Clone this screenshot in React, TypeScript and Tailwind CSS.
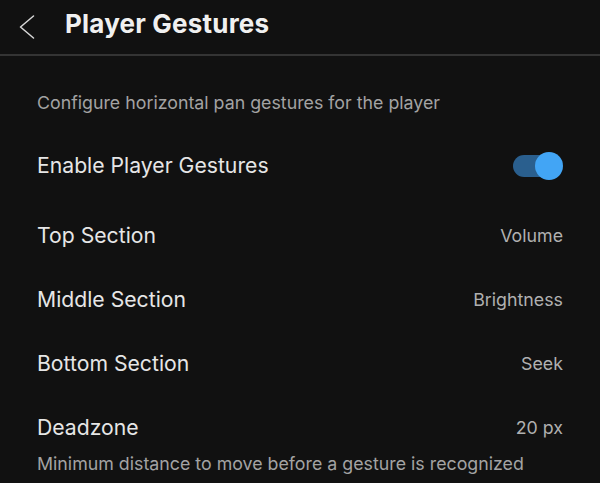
const rows = [
  { label: 'Top Section', value: 'Volume' },
  { label: 'Middle Section', value: 'Brightness' },
  { label: 'Bottom Section', value: 'Seek' },
]

export default function App() {
  return (
    <div className="h-[483px] w-[600px] overflow-hidden bg-[#111111] font-['Inter',sans-serif] text-[#e6e6e6]">
      {/* Header */}
      <div className="flex h-[56px] items-center border-b-2 border-[#343434] pb-[6px] pl-[19px]">
        <svg width="16" height="24" viewBox="0 0 16 24" fill="none" className="mt-[5px]">
          <path d="M14.5 1 L1.5 12 L14.5 23" stroke="#d8d8d8" strokeWidth="1.5" strokeLinecap="round" strokeLinejoin="round" />
        </svg>
        <h1 className="ml-[30px] text-[26px] font-bold leading-none tracking-[0.2px] text-[#f0f0f0]">Player Gestures</h1>
      </div>

      <div className="px-[37px]">
        <p className="mt-[35px] text-[17.8px] leading-[24px] text-[#a3a3a3]">Configure horizontal pan gestures for the player</p>

        <div className="mt-[36px] flex h-[30px] items-center justify-between">
          <span className="text-[21.2px] leading-none">Enable Player Gestures</span>
          <div className="relative mr-[6px] h-[22px] w-[44px] rounded-full bg-[#2a5f8e]">
            <span className="absolute right-[-6px] top-[-3px] h-[28px] w-[28px] rounded-full bg-[#42a5f5]" />
          </div>
        </div>

        {rows.map((r, i) => (
          <div key={r.label} className={`flex h-[30px] items-center justify-between ${i === 0 ? 'mt-[40px]' : 'mt-[34px]'}`}>
            <span className="text-[21.2px] leading-none">{r.label}</span>
            <span className="text-[17.8px] leading-none text-[#b0b0b0]">{r.value}</span>
          </div>
        ))}

        <div className="mt-[34px] flex h-[30px] items-center justify-between">
          <span className="text-[21.2px] leading-none">Deadzone</span>
          <span className="text-[17.8px] leading-none text-[#b0b0b0]">20 px</span>
        </div>
        <p className="mt-[9px] text-[17.8px] leading-[24px] text-[#a3a3a3]">Minimum distance to move before a gesture is recognized</p>
      </div>
    </div>
  )
}
